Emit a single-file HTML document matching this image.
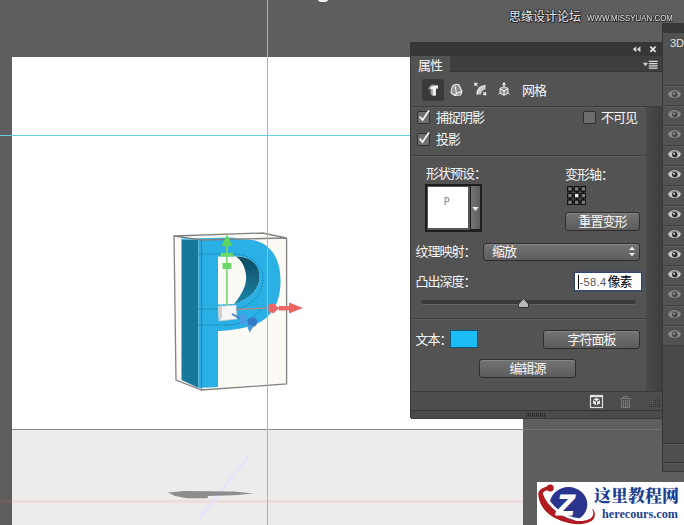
<!DOCTYPE html>
<html lang="zh-CN">
<head>
<meta charset="utf-8">
<title>属性</title>
<style>
html,body{margin:0;padding:0;}
body{width:684px;height:525px;overflow:hidden;background:#5e5e5e;position:relative;
 font-family:"Liberation Sans","Noto Sans CJK SC",sans-serif;font-size:12px;color:#eaeaea;}
.abs{position:absolute;}
#canvas{left:12px;top:57px;width:511px;height:372px;background:#fff;}
#ground{left:12px;top:429px;width:511px;height:96px;background:#ececec;border-top:1px solid #8a8a8a;box-sizing:border-box;}
#gv{left:267px;top:0;width:1px;height:525px;background:#62d2e2;}
#gh{left:0;top:135px;width:411px;height:1px;background:#62d2e2;}
#redline{left:0;top:500px;width:523px;height:3px;background:rgba(255,110,110,.13);}
/* properties panel */
#pp{left:411px;top:42px;width:251px;height:376px;background:#535353;box-shadow:-1px 0 0 #383838,0 1px 0 #3a3a3a;}
#pp .title{left:0;top:0;width:251px;height:14px;background:#363636;}
#pp .tabbar{left:0;top:14px;width:251px;height:16px;background:#3f3f3f;box-shadow:inset 0 -1px 0 #353535;}
#pp .tab{left:0;top:14px;width:39px;height:17px;background:#535353;line-height:20px;text-indent:7px;margin-top:0;overflow:hidden;}
#pp .strip{left:235px;top:65px;width:16px;height:284px;background:linear-gradient(90deg,#4a4a4a,#3e3e3e);}
#pp .foot{left:0;top:349px;width:251px;height:19px;background:#4d4d4d;border-top:1px solid #3a3a3a;box-sizing:border-box;}
#pp .bot{left:0;top:368px;width:251px;height:8px;background:#4a4a4a;border-top:1px solid #333;box-sizing:border-box;}
.sep{height:1px;background:#3c3c3c;box-shadow:0 1px 0 #5d5d5d;}
.lbl{white-space:nowrap;line-height:14px;font-size:13px;font-weight:400;color:#f6f6f6;letter-spacing:-1px;margin-top:1px;}
.cb{width:11px;height:11px;border:1px solid #2f2f2f;background:#6e6e6e;border-radius:2px;}
.btn{box-sizing:border-box;border:1px solid #2e2e2e;border-radius:3px;background:linear-gradient(#747474,#5c5c5c);box-shadow:inset 0 1px 0 #858585;text-align:center;line-height:17px;font-size:13px;letter-spacing:-1px;font-weight:400;color:#f8f8f8;white-space:nowrap;}
/* right 3D panel */
#rp{left:663px;top:23px;width:21px;height:449px;background:#525252;box-shadow:-1px 0 0 #363636;}
.rsep{left:0;width:21px;height:1px;background:#3e3e3e;box-shadow:0 1px 0 #5c5c5c;}
</style>
</head>
<body>
<div id="canvas" class="abs"></div>
<div id="ground" class="abs"></div>
<div id="redline" class="abs"></div>

<svg class="abs" id="scene" style="left:0;top:0" width="684" height="525" viewBox="0 0 684 525">
 <defs><linearGradient id="cres" x1="0" y1="0" x2="0" y2="1"><stop offset="0" stop-color="#0d4a62"/><stop offset="1" stop-color="#1b86aa"/></linearGradient><filter id="b1" x="-5%" y="-5%" width="110%" height="110%"><feGaussianBlur stdDeviation="0.5"/></filter></defs>
 <!-- ground shadow and z axis -->
 <path d="M247.6 455L251 455L201 519L197 519Z" fill="#e4e4fa" opacity=".8"/>
 <path d="M168 492.4L184.4 491L233.6 491.5L253.5 493.5L233.6 495.2L207.8 495.9L207.8 498.2L186.8 498.2L175 495.9Z" fill="#8d8d8d"/>
 <g filter="url(#b1)">
 <!-- bounding box fill -->
 <path d="M174 236L262.5 233L286.6 238L286.6 384L201.5 390L176.5 380Z" fill="#fcfaf5"/>
 <!-- P side face -->
 <path d="M181.5 240L198.5 240L198.5 388L181.5 380Z" fill="#16789a"/>
 <!-- P front -->
 <path d="M198.5 239.8 L244 239.2 C268 239 280.5 256 280.5 280 C281 303 271 317.5 257 323.5 C246 328 233 330.5 218 331 L218 387 L198.5 388 Z
          M218 256.5 L218 304.5 L234 304 C248 300 259.5 290 259.5 277 C259.5 264 249 256.5 238 256.5 Z" fill="#2bb0e5" fill-rule="evenodd"/>
 <!-- inner side of bowl seen through hole -->
 <path d="M236 256.5 C250 256.5 259.5 264 259.5 277 C259.5 290 248 300 234 304 C243 293 247 284 246 275 C245 266 241 260 236 256.5Z" fill="url(#cres)"/>
 <!-- top edge highlight -->
 <path d="M180.5 240L198.5 239.8L244 239.2L232 237.5L182 238.5Z" fill="#3db6e6"/>
 </g>
 <!-- wireframe -->
 <g fill="none" stroke="#7c7c7c" stroke-width="1.3" opacity=".95">
  <path d="M174 236L262.5 233L286.6 238L201.5 240L174 236L176 380L201.5 390L286.6 384L286.6 238"/>
  <path d="M201.5 240L201.5 390" stroke="#2583c0" opacity=".85"/>
 </g>
 <!-- dotted selection -->
 <g fill="none" stroke="#0d5a80" stroke-width="0.8" stroke-dasharray="1.2 1.6">
  <path d="M199 254H232C252 254 263 266 263 279C263 296 248 309 232 309H199"/>
  <path d="M199 325H228C244 324 256 317 263 306"/>
 </g>
 <!-- gizmo -->
 <g filter="url(#b1)">
  <path d="M226.8 244V306" stroke="#7fd67a" stroke-width="1.6"/>
  <path d="M227 234.5L232.5 246H221.5Z" fill="#5fd35e"/>
  <path d="M220.5 253H233V256.5H220.5Z" fill="#6ad868"/>
  <path d="M222.5 263H231.5V269H222.5Z" fill="#6ad868"/>
  <path d="M218 306.5L236 305L237 319L219 321Z" fill="#f6f6f6" stroke="#c8c8c8" stroke-width=".6"/>
  <path d="M218 306.5L222 305L222 318L219 321Z" fill="#cfcfcf"/>
  <path d="M236 309.5L268 308" stroke="#a08f8f" stroke-width="1.4"/>
  <path d="M268.5 304H275V312.5H268.5Z" fill="#e86866"/>
  <path d="M272 303.2L280 308.2L272 313.4Z" fill="#e86866"/>
  <path d="M289 302.5L303 308L289 313.5Z" fill="#e86462"/><path d="M279 306H290V310.5H279Z" fill="#e86866"/>
  <path d="M232 314L243 320" stroke="#3b78c8" stroke-width="1.6"/>
  <path d="M240 314.5H246.5V324H240Z" fill="#4c9ce6"/>
  <circle cx="252.5" cy="322" r="4.8" fill="#3478c8"/>
  <path d="M246.5 324L254 326L249.5 332.4Z" fill="#4a98dc"/>
 </g>
</svg>
<div id="gh" class="abs"></div>
<div id="gv" class="abs"></div>

<div class="abs" style="left:523px;top:429px;width:140px;height:1px;background:#737373;"></div>
<div id="pp" class="abs">
 <div class="abs title"></div>
 <div class="abs tabbar"></div>
 <div class="abs tab lbl">属性</div>
 <svg class="abs" style="left:218px;top:3px" width="32" height="9" viewBox="0 0 32 9">
  <path d="M3.8 4.3L7.3 1.3V7.3ZM7.9 4.3L11.4 1.3V7.3Z" fill="#d8d8d8"/>
  <path d="M21.3 1.6L26.6 6.9M26.6 1.6L21.3 6.9" stroke="#e4e4e4" stroke-width="1.7" fill="none"/>
 </svg>
 <svg class="abs" style="left:231px;top:17px" width="18" height="12" viewBox="0 0 18 12">
  <path d="M0.8 3.8H6L3.4 7.2Z" fill="#d4d4d4"/>
  <path d="M6.8 2.3H15.5M6.8 4.6H15.5M6.8 6.9H15.5M6.8 9.2H15.5" stroke="#dcdcdc" stroke-width="1.2"/>
 </svg>
 <div class="abs" style="left:11px;top:37px;width:22px;height:22px;background:#3a3a3a;border-radius:2px;"></div>
 <svg class="abs" id="icons" style="left:0;top:30px" width="140" height="35" viewBox="0 0 140 35">
  <!-- icon1: extruded T -->
  <path d="M17.5 15.5L21 12.5L27 13.2L27 16.5L24.8 16.3L24.8 23.5L21.3 23.8L19.5 22L19.5 17.5L17.5 17.2Z" fill="#9a9a9a"/>
  <path d="M19.8 14.6L27 13.4L27 16.4L24.9 16.6L24.9 23.6L21.8 23.6L21.8 17L19.8 17.2Z" fill="#f2f2f2"/>
  <!-- icon2: deform -->
  <path d="M41 15.5C42 12.5 46 11.5 48 13L51 19.5L49.5 23L43.5 23.5L40 20.5Z" fill="#8e8e8e"/>
  <path d="M41 15.5C42 12.5 46 11.5 48 13L51 19.5L49.5 23L43.5 23.5L40 20.5ZM44 14L45.5 21.5L50.5 19.5M45.5 21.5L43.5 23.5" fill="none" stroke="#f0f0f0" stroke-width="1.1" stroke-linejoin="round"/>
  <!-- icon3: cap -->
  <path d="M66 22.5C66 17 69.5 13.5 74.5 13.5L74.5 17.5C72 17.5 70 19.5 70 22.5Z" fill="#c9c9c9"/>
  <path d="M66 22.5C66 17 69.5 13.5 74.5 13.5" fill="none" stroke="#f4f4f4" stroke-width="1.2"/>
  <path d="M63.5 11L66.5 11.5L64 14Z M64.5 12L67 14.5" fill="#f0f0f0" stroke="#f0f0f0" stroke-width=".8"/>
  <path d="M75 23L72 22.5L74.5 20Z M74 22L71.8 19.8" fill="#f0f0f0" stroke="#f0f0f0" stroke-width=".8"/>
  <!-- icon4: coordinates cube -->
  <path d="M93 14.5L97 16.5V21L93 23.3L89 21V16.5Z" fill="#8a8a8a" stroke="#f0f0f0" stroke-width="1"/>
  <path d="M93 19V23.3M93 19L89 16.5M93 19L97 16.5" fill="none" stroke="#f0f0f0" stroke-width="1"/>
  <path d="M93 11V15M93 10.5L94.3 12.5H91.7Z M87.5 22.5L89 21M98.5 22.5L97 21" fill="#f0f0f0" stroke="#f0f0f0" stroke-width=".9"/>
 </svg>
 <div class="abs lbl" style="left:111px;top:41px;">网格</div>
 <div class="abs sep" style="left:0;top:64px;width:251px;"></div>
 <div class="abs strip"></div>

 <div class="abs cb" style="left:6px;top:69px;"></div>
 <div class="abs lbl" style="left:25px;top:68px;">捕捉阴影</div>
 <div class="abs cb" style="left:172px;top:69px;"></div>
 <div class="abs lbl" style="left:190px;top:68px;">不可见</div>
 <div class="abs cb" style="left:6px;top:91px;"></div>
 <div class="abs lbl" style="left:25px;top:90px;">投影</div>
 <svg class="abs" style="left:6px;top:67px" width="16" height="40" viewBox="0 0 16 40">
  <path d="M2.5 7.5L5.5 11L12 1.5" stroke="#f2f2f2" stroke-width="1.8" fill="none"/>
  <path d="M2.5 29.5L5.5 33L12 23.5" stroke="#f2f2f2" stroke-width="1.8" fill="none"/>
 </svg>
 <div class="abs sep" style="left:0;top:113px;width:235px;"></div>

 <div class="abs lbl" style="left:15px;top:124px;">形状预设：</div>
 <div class="abs lbl" style="left:154px;top:125px;">变形轴：</div>
 <div class="abs" style="left:13.5px;top:141.5px;width:57px;height:48px;background:#1e1e1e;"></div>
 <div class="abs" style="left:15.5px;top:143.5px;width:43px;height:44px;background:#565656;"></div>
 <div class="abs" style="left:16.7px;top:145.4px;width:40.8px;height:40.7px;background:#fff;"></div>
 <div class="abs" style="left:60px;top:143.8px;width:9px;height:43.6px;background:linear-gradient(90deg,#757575,#5e5e5e);"></div>
 <svg class="abs" style="left:60px;top:163px" width="9" height="8" viewBox="0 0 9 8"><path d="M1.3 2H7.7L4.5 6Z" fill="#f4f4f4"/></svg>
 <div class="abs" style="left:32.5px;top:154px;font-size:10.5px;font-weight:bold;color:#9a9a9a;line-height:10px;transform:scaleX(.8);transform-origin:0 0;">P</div>
 <svg class="abs" style="left:156px;top:143.8px" width="19.4" height="19.2" viewBox="0 0 20 20" id="grid9">
  <path d="M3 3H17V17H3ZM3 10H17M10 3V17" fill="none" stroke="#0a0a0a" stroke-width="1.2"/>
  <g fill="#7a7a7a" stroke="#0a0a0a" stroke-width="1.2">
   <rect x="0.6" y="0.6" width="4.8" height="4.8"/><rect x="7.6" y="0.6" width="4.8" height="4.8"/><rect x="14.6" y="0.6" width="4.8" height="4.8"/>
   <rect x="0.6" y="7.6" width="4.8" height="4.8"/><rect x="7.6" y="7.6" width="4.8" height="4.8" fill="#fff"/><rect x="14.6" y="7.6" width="4.8" height="4.8"/>
   <rect x="0.6" y="14.6" width="4.8" height="4.8"/><rect x="7.6" y="14.6" width="4.8" height="4.8"/><rect x="14.6" y="14.6" width="4.8" height="4.8"/>
  </g>
 </svg>
 <div class="abs btn" style="left:154px;top:170px;width:75px;height:19px;">重置变形</div>

 <div class="abs lbl" style="left:4.5px;top:202px;">纹理映射：</div>
 <div class="abs btn" style="left:72px;top:200.5px;width:157px;height:18px;text-align:left;text-indent:8px;line-height:16px;">缩放</div>
 <svg class="abs" style="left:217px;top:204px" width="8" height="11" viewBox="0 0 8 11"><path d="M1 4L4 0.8L7 4ZM1 7L4 10.2L7 7Z" fill="#f0f0f0"/></svg>

 <div class="abs lbl" style="left:4.5px;top:232px;">凸出深度：</div>
 <div class="abs" style="left:162.5px;top:229.5px;width:68px;height:19.5px;background:#fff;border:1px solid #33456e;box-shadow:0 0 0 1px #444f66;box-sizing:border-box;color:#222;line-height:17px;white-space:nowrap;font-size:13px;"><span style="position:absolute;left:3px;top:2px;width:1px;height:14px;background:#000;"></span><span style="position:absolute;left:5px;top:1px;font-size:11px;color:#555;letter-spacing:0.4px;">-58.4</span><span style="position:absolute;left:33px;top:0.5px;color:#000;letter-spacing:-1px;">像素</span></div>

 <div class="abs" style="left:10px;top:257.5px;width:215px;height:4px;border-radius:2px;background:#3a3a3a;box-shadow:0 1px 0 #656565;"></div>
 <svg class="abs" style="left:106px;top:255px" width="13" height="12" viewBox="0 0 13 12"><path d="M6.5 1.5L11.5 7V10.5H1.5V7Z" fill="#b8b8b8" stroke="#303030" stroke-width="1"/></svg>
 <div class="abs sep" style="left:0;top:276px;width:235px;"></div>

 <div class="abs lbl" style="left:4.5px;top:290px;">文本：</div>
 <div class="abs" style="left:39px;top:288px;width:28px;height:18px;background:#1cbcf4;border:1px solid #0f587a;box-sizing:border-box;"></div>
 <div class="abs btn" style="left:132px;top:288px;width:97px;height:19px;">字符面板</div>
 <div class="abs btn" style="left:68px;top:317px;width:97px;height:19px;">编辑源</div>

 <div class="abs foot"></div>
 <svg class="abs" style="left:178px;top:352px" width="46" height="16" viewBox="0 0 46 16" id="footicons">
  <rect x="1.5" y="1.5" width="12" height="12" fill="none" stroke="#ddd" stroke-width="1.2"/>
  <path d="M1.5 2.2H13.5" stroke="#e4e4e4" stroke-width="2"/><path d="M7.5 3.8L11 5.7V9.6L7.5 11.6L4 9.6V5.7Z" fill="#e6e6e6"/><path d="M7.5 7.6V11.6M7.5 7.6L4 5.7M7.5 7.6L11 5.7" fill="none" stroke="#454545" stroke-width="1"/>
  <g stroke="#7a7a7a" fill="none" stroke-width="1"><path d="M31 4.5H42M34.5 4.5V2.5H38.5V4.5M32.5 5.5V13.5H40.5V5.5M34.5 6V13M36.5 6V13M38.5 6V13"/></g>
 </svg>
 <div class="abs bot"></div>
 <svg class="abs" style="left:238px;top:353px" width="12" height="13" viewBox="0 0 12 13"><g fill="#2c2c2c"><rect x="10" y="1" width="1" height="1"/><rect x="8" y="3" width="1" height="1"/><rect x="10" y="3" width="1" height="1"/><rect x="6" y="5" width="1" height="1"/><rect x="8" y="5" width="1" height="1"/><rect x="10" y="5" width="1" height="1"/><rect x="4" y="7" width="1" height="1"/><rect x="6" y="7" width="1" height="1"/><rect x="8" y="7" width="1" height="1"/><rect x="10" y="7" width="1" height="1"/><rect x="2" y="9" width="1" height="1"/><rect x="4" y="9" width="1" height="1"/><rect x="6" y="9" width="1" height="1"/><rect x="8" y="9" width="1" height="1"/><rect x="10" y="9" width="1" height="1"/><rect x="0" y="11" width="1" height="1"/><rect x="2" y="11" width="1" height="1"/><rect x="4" y="11" width="1" height="1"/><rect x="6" y="11" width="1" height="1"/><rect x="8" y="11" width="1" height="1"/><rect x="10" y="11" width="1" height="1"/></g></svg>
 <svg class="abs" style="left:115px;top:370.5px" width="21" height="4" viewBox="0 0 21 4"><g fill="#2a2a2a"><rect x="0" y="0" width="1" height="4"/><rect x="2" y="0" width="1" height="4"/><rect x="4" y="0" width="1" height="4"/><rect x="6" y="0" width="1" height="4"/><rect x="8" y="0" width="1" height="4"/><rect x="10" y="0" width="1" height="4"/><rect x="12" y="0" width="1" height="4"/><rect x="14" y="0" width="1" height="4"/><rect x="16" y="0" width="1" height="4"/><rect x="18" y="0" width="1" height="4"/></g></svg>
</div>
<div id="rp" class="abs">
 <div class="abs" style="left:0;top:0;width:21px;height:10px;background:#383838;"></div>
 <div class="abs" style="left:7px;top:13px;font-size:11px;line-height:14px;color:#e6e2d8;">3D</div>
<div class="abs rsep" style="top:62.2px"></div>
<div class="abs rsep" style="top:82.2px"></div>
<div class="abs rsep" style="top:102.2px"></div>
<div class="abs rsep" style="top:122.2px"></div>
<div class="abs rsep" style="top:142.2px"></div>
<div class="abs rsep" style="top:162.2px"></div>
<div class="abs rsep" style="top:182.2px"></div>
<div class="abs rsep" style="top:202.2px"></div>
<div class="abs rsep" style="top:222.2px"></div>
<div class="abs rsep" style="top:242.2px"></div>
<div class="abs rsep" style="top:262.2px"></div>
<div class="abs rsep" style="top:282.2px"></div>
<div class="abs rsep" style="top:302.2px"></div>
<div class="abs rsep" style="top:322.2px"></div>
<svg class="abs" style="left:4.5px;top:66.2px" width="13" height="11.2" viewBox="0 0 14 12"><path d="M0.3 6.2C2.5 1.6 11.5 1.6 13.7 6.2C11.5 10.8 2.5 10.8 0.3 6.2Z" fill="#8e8e8e"/><path d="M0.3 5.4C2.8 0.6 11.2 0.6 13.7 5.4" fill="none" stroke="#9c9c9c" stroke-width="0.9"/><circle cx="7.3" cy="6" r="3" fill="#474747"/><circle cx="6.6" cy="5" r="1" fill="#a8a8a8"/></svg>
<svg class="abs" style="left:4.5px;top:86.2px" width="13" height="11.2" viewBox="0 0 14 12"><path d="M0.3 6.2C2.5 1.6 11.5 1.6 13.7 6.2C11.5 10.8 2.5 10.8 0.3 6.2Z" fill="#8e8e8e"/><path d="M0.3 5.4C2.8 0.6 11.2 0.6 13.7 5.4" fill="none" stroke="#9c9c9c" stroke-width="0.9"/><circle cx="7.3" cy="6" r="3" fill="#474747"/><circle cx="6.6" cy="5" r="1" fill="#a8a8a8"/></svg>
<svg class="abs" style="left:4.5px;top:106.2px" width="13" height="11.2" viewBox="0 0 14 12"><path d="M0.3 6.2C2.5 1.6 11.5 1.6 13.7 6.2C11.5 10.8 2.5 10.8 0.3 6.2Z" fill="#8e8e8e"/><path d="M0.3 5.4C2.8 0.6 11.2 0.6 13.7 5.4" fill="none" stroke="#9c9c9c" stroke-width="0.9"/><circle cx="7.3" cy="6" r="3" fill="#474747"/><circle cx="6.6" cy="5" r="1" fill="#a8a8a8"/></svg>
<svg class="abs" style="left:4.5px;top:126.2px" width="13" height="11.2" viewBox="0 0 14 12"><path d="M0.3 6.2C2.5 1.6 11.5 1.6 13.7 6.2C11.5 10.8 2.5 10.8 0.3 6.2Z" fill="#cdcdcd"/><path d="M0.3 5.4C2.8 0.6 11.2 0.6 13.7 5.4" fill="none" stroke="#dedede" stroke-width="0.9"/><circle cx="7.3" cy="6" r="3" fill="#2e2e2e"/><circle cx="6.6" cy="5" r="1" fill="#f4f4f4"/></svg>
<svg class="abs" style="left:4.5px;top:146.2px" width="13" height="11.2" viewBox="0 0 14 12"><path d="M0.3 6.2C2.5 1.6 11.5 1.6 13.7 6.2C11.5 10.8 2.5 10.8 0.3 6.2Z" fill="#cdcdcd"/><path d="M0.3 5.4C2.8 0.6 11.2 0.6 13.7 5.4" fill="none" stroke="#dedede" stroke-width="0.9"/><circle cx="7.3" cy="6" r="3" fill="#2e2e2e"/><circle cx="6.6" cy="5" r="1" fill="#f4f4f4"/></svg>
<svg class="abs" style="left:4.5px;top:166.2px" width="13" height="11.2" viewBox="0 0 14 12"><path d="M0.3 6.2C2.5 1.6 11.5 1.6 13.7 6.2C11.5 10.8 2.5 10.8 0.3 6.2Z" fill="#cdcdcd"/><path d="M0.3 5.4C2.8 0.6 11.2 0.6 13.7 5.4" fill="none" stroke="#dedede" stroke-width="0.9"/><circle cx="7.3" cy="6" r="3" fill="#2e2e2e"/><circle cx="6.6" cy="5" r="1" fill="#f4f4f4"/></svg>
<svg class="abs" style="left:4.5px;top:186.2px" width="13" height="11.2" viewBox="0 0 14 12"><path d="M0.3 6.2C2.5 1.6 11.5 1.6 13.7 6.2C11.5 10.8 2.5 10.8 0.3 6.2Z" fill="#cdcdcd"/><path d="M0.3 5.4C2.8 0.6 11.2 0.6 13.7 5.4" fill="none" stroke="#dedede" stroke-width="0.9"/><circle cx="7.3" cy="6" r="3" fill="#2e2e2e"/><circle cx="6.6" cy="5" r="1" fill="#f4f4f4"/></svg>
<svg class="abs" style="left:4.5px;top:206.2px" width="13" height="11.2" viewBox="0 0 14 12"><path d="M0.3 6.2C2.5 1.6 11.5 1.6 13.7 6.2C11.5 10.8 2.5 10.8 0.3 6.2Z" fill="#cdcdcd"/><path d="M0.3 5.4C2.8 0.6 11.2 0.6 13.7 5.4" fill="none" stroke="#dedede" stroke-width="0.9"/><circle cx="7.3" cy="6" r="3" fill="#2e2e2e"/><circle cx="6.6" cy="5" r="1" fill="#f4f4f4"/></svg>
<svg class="abs" style="left:4.5px;top:226.2px" width="13" height="11.2" viewBox="0 0 14 12"><path d="M0.3 6.2C2.5 1.6 11.5 1.6 13.7 6.2C11.5 10.8 2.5 10.8 0.3 6.2Z" fill="#cdcdcd"/><path d="M0.3 5.4C2.8 0.6 11.2 0.6 13.7 5.4" fill="none" stroke="#dedede" stroke-width="0.9"/><circle cx="7.3" cy="6" r="3" fill="#2e2e2e"/><circle cx="6.6" cy="5" r="1" fill="#f4f4f4"/></svg>
<svg class="abs" style="left:4.5px;top:246.2px" width="13" height="11.2" viewBox="0 0 14 12"><path d="M0.3 6.2C2.5 1.6 11.5 1.6 13.7 6.2C11.5 10.8 2.5 10.8 0.3 6.2Z" fill="#cdcdcd"/><path d="M0.3 5.4C2.8 0.6 11.2 0.6 13.7 5.4" fill="none" stroke="#dedede" stroke-width="0.9"/><circle cx="7.3" cy="6" r="3" fill="#2e2e2e"/><circle cx="6.6" cy="5" r="1" fill="#f4f4f4"/></svg>
<svg class="abs" style="left:4.5px;top:266.2px" width="13" height="11.2" viewBox="0 0 14 12"><path d="M0.3 6.2C2.5 1.6 11.5 1.6 13.7 6.2C11.5 10.8 2.5 10.8 0.3 6.2Z" fill="#8e8e8e"/><path d="M0.3 5.4C2.8 0.6 11.2 0.6 13.7 5.4" fill="none" stroke="#9c9c9c" stroke-width="0.9"/><circle cx="7.3" cy="6" r="3" fill="#474747"/><circle cx="6.6" cy="5" r="1" fill="#a8a8a8"/></svg>
<svg class="abs" style="left:4.5px;top:286.2px" width="13" height="11.2" viewBox="0 0 14 12"><path d="M0.3 6.2C2.5 1.6 11.5 1.6 13.7 6.2C11.5 10.8 2.5 10.8 0.3 6.2Z" fill="#8e8e8e"/><path d="M0.3 5.4C2.8 0.6 11.2 0.6 13.7 5.4" fill="none" stroke="#9c9c9c" stroke-width="0.9"/><circle cx="7.3" cy="6" r="3" fill="#474747"/><circle cx="6.6" cy="5" r="1" fill="#a8a8a8"/></svg>
<svg class="abs" style="left:4.5px;top:306.2px" width="13" height="11.2" viewBox="0 0 14 12"><path d="M0.3 6.2C2.5 1.6 11.5 1.6 13.7 6.2C11.5 10.8 2.5 10.8 0.3 6.2Z" fill="#8e8e8e"/><path d="M0.3 5.4C2.8 0.6 11.2 0.6 13.7 5.4" fill="none" stroke="#9c9c9c" stroke-width="0.9"/><circle cx="7.3" cy="6" r="3" fill="#474747"/><circle cx="6.6" cy="5" r="1" fill="#a8a8a8"/></svg>
 <div class="abs" style="left:0;top:323px;width:21px;height:97px;background:#494949;"></div>
 <div class="abs" style="left:0;top:420px;width:21px;height:29px;background:#505050;"></div>
 <div class="abs" style="left:0;top:420px;width:21px;height:1px;background:#343434;"></div>
 <div class="abs" style="left:0;top:421px;width:21px;height:1px;background:#5c5c5c;"></div>
 <div class="abs" style="left:0;top:439px;width:21px;height:1px;background:#343434;"></div>
 <div class="abs" style="left:0;top:440px;width:21px;height:1px;background:#5a5a5a;"></div>
 <div class="abs" style="left:0;top:448px;width:21px;height:1px;background:#343434;"></div>

</div>

<div class="abs" id="wm1" style="left:509px;top:7px;width:75px;height:18px;font-size:12px;line-height:18px;color:#e4e4e4;white-space:nowrap;text-shadow:1px 1px 0 #262626,-1px -1px 0 #3a3a3a,1px -1px 0 #3a3a3a,-1px 1px 0 #3a3a3a,0 1px 0 #2a2a2a,1px 0 0 #2a2a2a;margin-top:1px;">思缘设计论坛</div>
<div class="abs" id="wm2" style="left:587px;top:12px;height:12px;font-family:'Liberation Sans',sans-serif;font-weight:normal;font-size:9.5px;line-height:12px;color:#e0e0e0;white-space:nowrap;transform-origin:0 0;transform:scaleX(0.83);text-shadow:1px 1px 0 #262626,-1px 0 0 #3a3a3a,0 -1px 0 #3a3a3a,1px 0 0 #333,0 1px 0 #333;">WWW.MISSYUAN.COM</div>
<div class="abs" style="left:317.5px;top:-3px;width:10px;height:4.5px;border-radius:50%;background:#f0f0f0;"></div>
<div class="abs" id="logo" style="left:537px;top:481.5px;width:147px;height:44px;background:#fff;overflow:hidden;">
 <svg class="abs" style="left:0;top:0" width="64" height="44" viewBox="0 0 64 44">
  <ellipse cx="31.5" cy="22.3" rx="18.8" ry="17.2" fill="#28348e"/>
  <path d="M11 4.5C5 5 0.8 9 1.3 13C2 21 6 27 11.2 31.5C17 36.5 26 40 34 41.5C42 43 50 42 54.5 39C57.5 37 58.5 33 57.5 30C57 28.3 56 27 55.1 26.9C56.5 29.5 56.8 32 55.5 34.2C54 37 49 38.8 44 39C38 39.2 33 37.5 28 35C22 32 16.5 28 12.5 23C9 18.5 6.5 14.5 5.8 11C6.5 9.5 8.5 8.5 11 8Z" fill="#b11a20"/>
  <path d="M8 12C10 18 15 24.5 21 29C27 33.5 35 37 43 37.8" fill="none" stroke="#fff" stroke-width="2.6"/>
  <circle cx="13.2" cy="6" r="3.5" fill="#b11a20"/>
  <text x="19.5" y="33.3" font-family="Liberation Sans, sans-serif" font-weight="bold" font-style="italic" font-size="29" fill="#fff" stroke="#fff" stroke-width="1.1">Z</text>
 </svg>
 <div class="abs" id="wm3" style="left:57px;top:4px;font-family:'Liberation Serif','Noto Serif CJK SC',serif;font-weight:900;font-size:17px;line-height:22px;color:#1c3f94;white-space:nowrap;">这里教程网</div>
 <div class="abs" id="wm4" style="left:65px;top:24.5px;font-family:'Liberation Serif',serif;font-weight:bold;font-size:12.2px;line-height:16px;color:#1c3f94;white-space:nowrap;">herecours.com</div>
</div>
</body>
</html>
